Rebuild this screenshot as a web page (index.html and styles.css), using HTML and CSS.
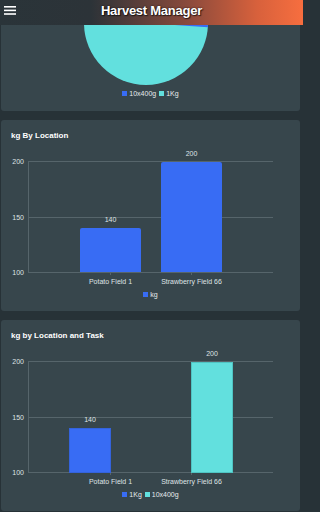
FILE: index.html
```html
<!DOCTYPE html>
<html lang="en">
<head>
<meta charset="utf-8">
<title>Harvest Manager</title>
<link rel="stylesheet" href="styles.css">
</head>
<body>
<header class="topbar">
  <svg class="menu-icon" width="12" height="10" viewBox="0 0 12 10" aria-hidden="true">
    <rect x="0" y="0" width="12" height="1.6" fill="#fff"/>
    <rect x="0" y="3.6" width="12" height="1.6" fill="#fff"/>
    <rect x="0" y="7.2" width="12" height="1.6" fill="#fff"/>
  </svg>
  <h1 class="title">Harvest Manager</h1>
</header>

<main class="content">
  <section class="card card-pie">
    <svg class="pie" width="299" height="62" viewBox="0 0 299 62">
      <circle cx="145" cy="-2" r="62" fill="#62e0de"/>
      <path d="M145 -2 L207 -2 A62 62 0 0 1 206.85 2.3 Z" fill="#386cf4"/>
    </svg>
    <div class="legend">
      <span class="legend-item"><i class="swatch blue"></i>10x400g</span>
      <span class="legend-item"><i class="swatch cyan"></i>1Kg</span>
    </div>
  </section>

  <section class="card card-chart">
    <h2 class="card-title">kg By Location</h2>
    <svg class="chart" width="299" height="144" viewBox="0 0 299 144">
      <g class="grid">
        <line x1="27" y1="17.5" x2="272" y2="17.5"/>
        <line x1="27" y1="73.5" x2="272" y2="73.5"/>
        <line x1="27" y1="128.5" x2="272" y2="128.5"/>
        <line x1="27.5" y1="17" x2="27.5" y2="129"/>
        <line x1="109.5" y1="128" x2="109.5" y2="131"/>
        <line x1="190.5" y1="128" x2="190.5" y2="131"/>
      </g>
      <g class="ylabels">
        <text x="23" y="20">200</text>
        <text x="23" y="76">150</text>
        <text x="23" y="131">100</text>
      </g>
      <path class="bar-blue" d="M79 128 V86 Q79 84 81 84 H138 Q140 84 140 86 V128 Z"/>
      <path class="bar-blue" d="M160 128 V20 Q160 18 162 18 H219 Q221 18 221 20 V128 Z"/>
      <g class="values">
        <text x="109.5" y="78">140</text>
        <text x="190.5" y="12">200</text>
      </g>
      <g class="xlabels">
        <text x="109.5" y="140">Potato Field 1</text>
        <text x="190.5" y="140">Strawberry Field 66</text>
      </g>
    </svg>
    <div class="legend">
      <span class="legend-item"><i class="swatch blue"></i>kg</span>
    </div>
  </section>

  <section class="card card-chart">
    <h2 class="card-title">kg by Location and Task</h2>
    <svg class="chart" width="299" height="144" viewBox="0 0 299 144">
      <g class="grid">
        <line x1="27" y1="17.5" x2="272" y2="17.5"/>
        <line x1="27" y1="73.5" x2="272" y2="73.5"/>
        <line x1="27" y1="128.5" x2="272" y2="128.5"/>
        <line x1="27.5" y1="17" x2="27.5" y2="129"/>
        <line x1="109.5" y1="128" x2="109.5" y2="131"/>
        <line x1="190.5" y1="128" x2="190.5" y2="131"/>
      </g>
      <g class="ylabels">
        <text x="23" y="20">200</text>
        <text x="23" y="76">150</text>
        <text x="23" y="131">100</text>
      </g>
      <rect class="bar-blue edged" x="68.5" y="84.5" width="41" height="44"/>
      <rect class="bar-cyan edged" x="190.5" y="18.5" width="41" height="110"/>
      <g class="values">
        <text x="89" y="78">140</text>
        <text x="211" y="12">200</text>
      </g>
      <g class="xlabels">
        <text x="109.5" y="140">Potato Field 1</text>
        <text x="190.5" y="140">Strawberry Field 66</text>
      </g>
    </svg>
    <div class="legend">
      <span class="legend-item"><i class="swatch blue"></i>1Kg</span>
      <span class="legend-item"><i class="swatch cyan"></i>10x400g</span>
    </div>
  </section>
</main>
</body>
</html>
```

FILE: styles.css
```css
html, body {
  margin: 0;
  padding: 0;
}

html {
  background: #273237;
}

body {
  background: #273237;
  font-family: "Liberation Sans", Arial, sans-serif;
  color: #fff;
  width: 303px;
  overflow: hidden;
}

.topbar {
  height: 25px;
  display: flex;
  align-items: center;
  position: relative;
  background: linear-gradient(90deg, #2a3439 0%, #2c3338 30%, #8a4a3c 62%, #d8613c 85%, #f76e3f 100%);
}

.menu-icon {
  display: block;
  margin-left: 4px;
  margin-top: -3px;
}

.title {
  position: absolute;
  left: 0;
  right: 0;
  top: 0;
  margin: 0;
  text-align: center;
  font-size: 13px;
  font-weight: bold;
  letter-spacing: -0.25px;
  line-height: 22px;
  color: #fff;
  text-shadow: 0 0 2px rgba(0, 0, 0, 0.8), 1px 1px 1px rgba(0, 0, 0, 0.6);
  pointer-events: none;
}

.content {
  display: flex;
  flex-direction: column;
  gap: 9px;
  padding: 0 3px 0 1px;
}

.card {
  background: #37464c;
  border-radius: 3px;
  overflow: hidden;
}

.card-pie {
  border-radius: 0 0 3px 3px;
  height: 86px;
  display: flex;
  flex-direction: column;
  align-items: center;
}

.pie {
  display: block;
}

.card-pie .legend {
  margin-top: 2px;
}

.card-chart {
  padding-bottom: 12px;
}

.card-chart .legend {
  margin-top: 2px;
}

.card-title {
  margin: 0;
  padding: 11px 10px 0;
  height: 13px;
  font-size: 8px;
  line-height: 9px;
  font-weight: bold;
  color: #fff;
}

.chart {
  display: block;
}

.grid line {
  stroke: #56656b;
  stroke-width: 1;
  shape-rendering: crispEdges;
}

.ylabels text {
  font-family: "Liberation Sans", Arial, sans-serif;
  font-size: 7px;
  fill: #dfe3e5;
  text-anchor: end;
}

.values text,
.xlabels text {
  font-family: "Liberation Sans", Arial, sans-serif;
  font-size: 7px;
  fill: #dfe3e5;
  text-anchor: middle;
}

.bar-blue {
  fill: #386cf4;
}

.bar-cyan {
  fill: #62e0de;
}

.edged.bar-blue {
  stroke: #3463dc;
  stroke-width: 1;
  shape-rendering: crispEdges;
}

.edged.bar-cyan {
  stroke: #4fc4c3;
  stroke-width: 1;
  shape-rendering: crispEdges;
}

.legend {
  height: 9px;
  display: flex;
  justify-content: center;
  align-items: center;
  gap: 3px;
  font-size: 7px;
  line-height: 9px;
  color: #e6eaec;
}

.legend-item {
  display: flex;
  align-items: center;
  gap: 2px;
}

.swatch {
  display: block;
  width: 5px;
  height: 5px;
}

.swatch.blue {
  background: #386cf4;
}

.swatch.cyan {
  background: #62e0de;
}
```
